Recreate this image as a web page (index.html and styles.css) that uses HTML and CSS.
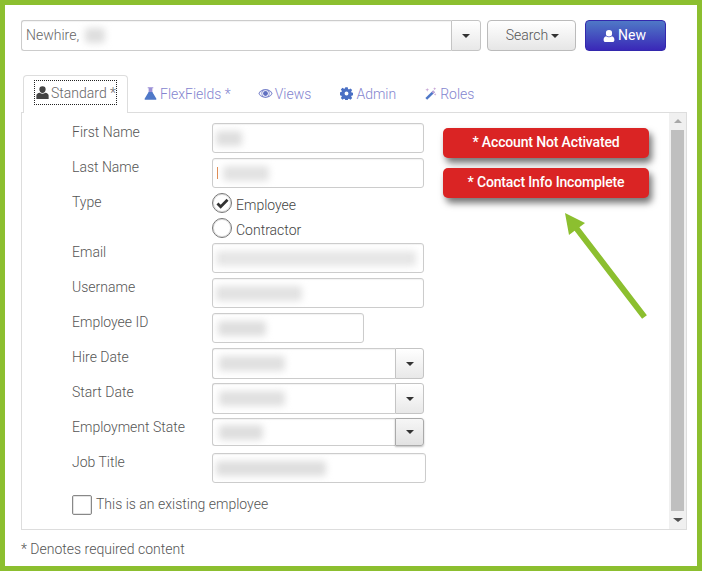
FILE: index.html
```html
<!DOCTYPE html>
<html lang="en">
<head>
<meta charset="utf-8">
<title>Newhire</title>
<link rel="stylesheet" href="styles.css">
</head>
<body>
<div class="frame">
  <div class="topbar">
    <div class="combo">
      <div class="field field-grow"><span class="typed">Newhire,</span><span class="smudge s-name"></span></div>
      <button class="drop"><span class="caret"></span></button>
    </div>
    <button class="btn btn-search"><span class="btn-label">Search</span> <span class="caret"></span></button>
    <button class="btn btn-new">
      <svg class="ic-user-w" viewBox="0 0 14 16"><path fill="#fff" d="M7 1a3.600 3.600 0 0 1 3.600 3.800A3.600 3.600 0 0 1 7 8.600a3.600 3.600 0 0 1-3.600-3.800A3.600 3.600 0 0 1 7 1zM3.600 8.200C4.500 9 5.700 9.500 7 9.500s2.500-.5 3.400-1.300c1.900.3 2.900 1.900 2.900 4.400 0 1.500-.9 2.400-2.300 2.400H3c-1.400 0-2.300-.9-2.300-2.400 0-2.500 1-4.100 2.900-4.400z"/></svg>
      <span class="btn-label">New</span>
    </button>
  </div>

  <div class="tabs">
    <div class="tab active">
      <span class="focus">
        <svg class="ic" viewBox="0 0 14 14"><path fill="#444" d="M7 0.200a3.400 3.400 0 0 1 3.400 3.600c0 2-1.500 3.800-3.400 3.800S3.600 5.800 3.600 3.800A3.400 3.400 0 0 1 7 .2zM4 7.200C4.800 8 5.900 8.400 7 8.400s2.200-.4 3-1.200c2 .4 3.600 1.200 3.600 3V14H.4v-3.800c0-1.800 1.600-2.600 3.600-3z"/></svg>
        Standard *
      </span>
    </div>
    <div class="tab">
      <svg class="ic" viewBox="0 0 14 14"><path fill="#9a8fd6" d="M4 .2h6v1.200H9v4.300L8 6H6l-1-.3V1.400H4z"/><path fill="#4f78c8" d="M5 5.500L.8 12.300c-.5.900 0 1.500.9 1.500h10.600c.9 0 1.400-.6.900-1.500L9 5.500l-1 3H6z"/><path fill="#4f78c8" d="M5 5.500h4l1 3.500H4z"/></svg>
      FlexFields *
    </div>
    <div class="tab">
      <svg class="ic ic-wide" viewBox="0 0 16 12"><path fill="#7c86cc" d="M8 1.300c3.200 0 6 1.900 7.600 4.700C14 8.800 11.200 10.700 8 10.700S2 8.800.4 6C2 3.200 4.800 1.300 8 1.300zM8 2.500A3.500 3.500 0 0 0 8 9.500 3.500 3.500 0 0 0 8 2.500zM4.200 3.400C3.100 4 2.200 4.900 1.600 6c.6 1.100 1.500 2 2.600 2.600a5 5 0 0 1 0-5.200zM11.800 3.400a5 5 0 0 1 0 5.200c1.100-.6 2-1.500 2.600-2.600-.6-1.100-1.500-2-2.600-2.600z"/><circle cx="8" cy="6" r="2.600" fill="#5f6fc0"/></svg>
      Views
    </div>
    <div class="tab">
      <svg class="ic" viewBox="0 0 14 14"><path fill="#4a6fc4" d="M5.700.3h2.600l.4 1.900 1 .4L11.300 1.500l1.800 1.800-1.100 1.600.4 1 1.900.4v2.600l-1.900.4-.4 1 1.100 1.600-1.800 1.800-1.600-1.100-1 .4-.4 1.900H5.700l-.4-1.900-1-.4-1.600 1.100-1.800-1.800 1.100-1.600-.4-1-1.900-.4V5.700l1.900-.4.4-1-1.100-1.600 1.800-1.800 1.600 1.100 1-.4zM7 4.900a2.100 2.100 0 1 0 0 4.200 2.100 2.100 0 0 0 0-4.200z"/></svg>
      Admin
    </div>
    <div class="tab">
      <svg class="ic" viewBox="0 0 14 14"><path fill="#4f78c8" d="M9.800 3.800l1.900 1.900-8.300 8.100-1.900-1.900z"/><path fill="#c7a6d6" d="M9.800 3.800l1.900 1.900-1.500 1.500-1.900-1.900zM3.500 1l.6 1.500 1.500.5-1.500.5-.6 1.500-.6-1.500L1.400 3l1.500-.5zM11.500.2l.5 1.200 1.200.5-1.200.5-.5 1.200-.5-1.200-1.200-.5 1.200-.5zM12 6.500l.4 1 1 .4-1 .4-.4 1-.4-1-1-.4 1-.4z"/></svg>
      Roles
    </div>
  </div>

  <div class="panel">
    <div class="form">
      <div class="row"><label class="lbl">First Name</label><div class="field w-full"><span class="smudge s-first"></span></div></div>
      <div class="row"><label class="lbl">Last Name</label><div class="field w-full"><span class="tick"></span><span class="smudge s-last"></span></div></div>
      <div class="row row-type">
        <label class="lbl">Type</label>
        <div class="radios">
          <div class="radio-row">
            <span class="radio"><svg class="check" viewBox="0 0 14 12"><path fill="none" stroke="#333" stroke-width="3" d="M1.500 6l3.500 3.500 7.500-7.500"/></svg></span>
            <span class="opt">Employee</span>
          </div>
          <div class="radio-row"><span class="radio"></span><span class="opt">Contractor</span></div>
        </div>
      </div>
      <div class="row"><label class="lbl">Email</label><div class="field w-full"><span class="smudge s-email"></span></div></div>
      <div class="row"><label class="lbl">Username</label><div class="field w-full"><span class="smudge s-user"></span></div></div>
      <div class="row"><label class="lbl">Employee ID</label><div class="field w-id"><span class="smudge s-id"></span></div></div>
      <div class="row"><label class="lbl">Hire Date</label><div class="combo w-full combo-form"><div class="field field-grow"><span class="smudge s-date"></span></div><button class="drop drop-form"><span class="caret"></span></button></div></div>
      <div class="row"><label class="lbl">Start Date</label><div class="combo w-full combo-form"><div class="field field-grow"><span class="smudge s-date"></span></div><button class="drop drop-form"><span class="caret"></span></button></div></div>
      <div class="row row-state"><label class="lbl">Employment State</label><div class="combo w-full combo-state"><div class="field field-grow"><span class="smudge s-state"></span></div><button class="drop drop-form drop-active"><span class="caret"></span></button></div></div>
      <div class="row"><label class="lbl">Job Title</label><div class="field w-job"><span class="smudge s-job"></span></div></div>
      <div class="existing"><span class="checkbox"></span><span class="opt-up">This is an existing employee</span></div>
    </div>
    <div class="alerts">
      <div class="alert">* Account Not Activated</div>
      <div class="alert">* Contact Info Incomplete</div>
    </div>
    <div class="scrollbar">
      <span class="arrow-up"></span>
      <div class="thumb"></div>
      <span class="arrow-down"></span>
    </div>
  </div>
  <p class="note">* Denotes required content</p>
  <svg class="pointer" viewBox="0 0 100 120"><path fill="#8cbf2f" d="M10 10 L30 20 L24.400 24.200 L91.900 112.200 L87.100 115.800 L19.600 27.800 L14 32z"/></svg>
</div>
</body>
</html>
```
FILE: styles.css
```css
* { box-sizing: border-box; }
html, body { margin: 0; padding: 0; background: #fff; }
body { font-family: Roboto, "Liberation Sans", sans-serif; font-size: 14px; color: #555; font-weight: 300; }
.frame { position: relative; width: 702px; height: 571px; border: 5px solid #8cbf2f; padding: 15px 10px 0 16px; overflow: hidden; }
.topbar { display: flex; height: 31px; }
.combo { display: flex; }
.topbar .combo { width: 460px; }
.field { height: 30px; border: 1px solid #ccc; border-radius: 3px; background: #fff; display: flex; align-items: center; padding-left: 2px; overflow: hidden; box-shadow: inset 0 1px 1px rgba(0,0,0,.05); }
.field-grow { flex: 1; border-radius: 3px 0 0 3px; border-right: 0; }
.topbar .field { height: 31px; padding-left: 4px; }
.typed { color: #666; margin-bottom: 2px; }
.smudge { display: block; height: 15px; background: #dedede; filter: blur(3.500px); border-radius: 3px; }
.s-name { width: 20px; margin-left: 6px; }
.s-first { width: 26px; margin-left: 1px; }
.s-last { width: 46px; margin-left: 5px; background: #e2e2e2; }
.tick { width: 1px; height: 12px; background: #e08a50; margin-left: 2px; flex: none; }
.s-email { width: 200px; margin-left: 1px; background: #e6e6e6; }
.s-user { width: 86px; margin-left: 1px; background: #e2e2e2; }
.s-id { width: 48px; margin-left: 3px; }
.s-date { width: 66px; margin-left: 4px; background: #e0e0e0; }
.s-state { width: 44px; margin-left: 4px; }
.s-job { width: 110px; margin-left: 1px; }
.drop { width: 30px; height: 100%; border: 1px solid #c4c4c4; border-radius: 0 3px 3px 0; background: linear-gradient(#fff, #e8e8e8); padding: 0; display: flex; align-items: center; justify-content: center; }
.caret { display: inline-block; width: 0; height: 0; border-left: 4px solid transparent; border-right: 4px solid transparent; border-top: 4px solid #333; vertical-align: middle; }
.btn { height: 31px; border-radius: 4px; font: inherit; display: flex; align-items: center; justify-content: center; padding: 0; }
.btn-label { margin-bottom: 2px; }
.btn-search { width: 89px; margin-left: 6px; gap: 3px; color: #555; font-weight: 300; border: 1px solid #bbb; background: linear-gradient(#fff, #e6e6e6); padding-left: 2px; }
.btn-new { width: 81px; margin-left: 9px; gap: 3px; color: #fff; font-weight: 400; border: 1px solid #3328ad; background: linear-gradient(#4f79c6, #3a28b8); padding-right: 2px; }
.ic-user-w { width: 12px; height: 14px; }
.tabs { display: flex; height: 38px; margin-top: 24px; margin-left: 2px; position: relative; z-index: 1; }
.tab { display: flex; align-items: center; gap: 3px; color: #8485cf; padding: 0 14px 1px; font-weight: 300; }
.tab:nth-child(2) { padding-left: 16px; }
.tab:nth-child(3) { gap: 2px; padding-left: 13px; padding-right: 15px; }
.tab.active { width: 105px; height: 38px; background: #fff; border: 1px solid #ddd; border-bottom: 0; border-radius: 4px 4px 0 0; color: #666; padding: 0 0 4px 11px; font-weight: 300; }
.focus { display: flex; align-items: center; gap: 2px; height: 23px; outline: 1px dotted #222; padding-left: 1px; white-space: nowrap; width: 81px; }
.ic { width: 13px; height: 13px; flex: none; }
.ic-wide { width: 15px; }
.panel { height: 418px; margin-top: -1px; border: 1px solid #ddd; display: flex; position: relative; }
.form { width: 403px; padding: 10px 0 0 50px; flex: none; }
.row { display: grid; grid-template-columns: 140px auto; justify-content: start; margin-bottom: 5px; }
.lbl { padding-top: 1px; color: #555; font-weight: 300; }
.w-full { width: 212px; }
.w-id { width: 152px; }
.w-job { width: 214px; }
.combo-form { height: 31px; margin-bottom: -1px; }
.combo-form .field { height: 31px; }
.combo-state { height: 28px; }
.combo-state .field { height: 28px; }
.row-state { margin-bottom: 7px; }
.drop-form { width: 29px; }
.drop-active { box-shadow: 0 1px 2px rgba(0,0,0,.25); border-color: #aaa; background: linear-gradient(#f6f6f6, #e2e2e2); }
.radios { display: flex; flex-direction: column; gap: 5px; }
.radio-row { display: flex; align-items: center; gap: 4px; height: 20px; color: #444; }
.opt { padding-top: 4px; }
.opt-up { padding-bottom: 2px; }
.radio { width: 20px; height: 20px; border: 1px solid #777; border-radius: 50%; background: #fff; display: flex; align-items: center; justify-content: center; box-shadow: inset 0 0 0 1px #ddd; }
.check { width: 13px; height: 11px; }
.existing { display: flex; align-items: center; gap: 4px; margin-top: 12px; color: #555; }
.checkbox { width: 20px; height: 20px; border: 1px solid #888; border-radius: 2px; background: #fff; box-shadow: inset 0 0 0 1px #e4e4e4; }
.alerts { width: 206px; margin-left: 18px; padding-top: 15px; flex: none; display: flex; flex-direction: column; gap: 10px; }
.alert { height: 30px; background: #da2424; color: #fff; border-radius: 5px; font-weight: 500; text-align: center; line-height: 28px; box-shadow: 3px 5px 7px rgba(0,0,0,.55); white-space: nowrap; letter-spacing: -.15px; }
.scrollbar { margin-left: auto; width: 17px; background: #f0f0f0; display: flex; flex-direction: column; align-items: center; }
.arrow-up { flex: none; margin: 6px 0 7px; width: 0; height: 0; border-left: 4px solid transparent; border-right: 4px solid transparent; border-bottom: 4px solid #a8a8a8; }
.thumb { flex: 1; width: 13px; background: #bfbfbf; }
.arrow-down { flex: none; margin: 7px 0; width: 0; height: 0; border-left: 5px solid transparent; border-right: 5px solid transparent; border-top: 4px solid #505050; }
.note { margin: 11px 0 0; color: #555; font-weight: 300; }
.pointer { position: absolute; left: 550px; top: 198px; width: 100px; height: 120px; }
```
